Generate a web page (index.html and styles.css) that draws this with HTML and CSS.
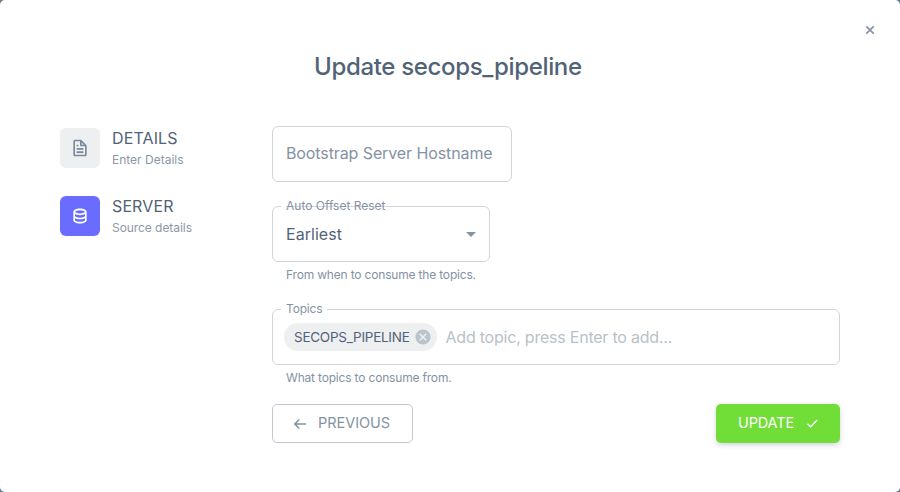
FILE: index.html
```html
<!DOCTYPE html>
<html lang="en">
<head>
<meta charset="utf-8">
<title>Update secops_pipeline</title>
<link rel="stylesheet" href="styles.css">
</head>
<body>
<main class="dialog">
  <button class="close" aria-label="Close"><svg width="10" height="10" viewBox="0 0 10 10"><path d="M1.3 1.3l7.4 7.4M8.7 1.3L1.3 8.7" fill="none" stroke="currentColor" stroke-width="1.7"/></svg></button>
  <h1 class="title"><span>Update secops_pipeline</span></h1>
  <div class="layout">
    <nav class="steps">
      <div class="step">
        <span class="avatar"><svg width="20" height="20" viewBox="0 0 24 24"><path fill="currentColor" d="M19.903 8.586a.997.997 0 0 0-.196-.293l-6-6a.997.997 0 0 0-.293-.196c-.03-.014-.062-.022-.094-.033a.991.991 0 0 0-.259-.051C13.04 2.011 13.021 2 13 2H6c-1.103 0-2 .897-2 2v16c0 1.103.897 2 2 2h12c1.103 0 2-.897 2-2V9c0-.021-.011-.04-.013-.062a.952.952 0 0 0-.051-.259c-.01-.032-.019-.063-.033-.093zM16.586 8H14V5.414L16.586 8zM6 20V4h6v5a1 1 0 0 0 1 1h5l.002 10H6z"/><path fill="currentColor" d="M8 12h8v2H8zm0 4h8v2H8zm0-8h2v2H8z"/></svg></span>
        <div class="step-text"><span class="step-name details">DETAILS</span><span class="step-note enter">Enter Details</span></div>
      </div>
      <div class="step">
        <span class="avatar active"><svg width="20" height="20" viewBox="0 0 24 24"><path fill="currentColor" d="M20 17V7c0-2.168-3.663-4-8-4S4 4.832 4 7v10c0 2.168 3.663 4 8 4s8-1.832 8-4zM12 5c3.691 0 5.931 1.507 6 1.994C17.931 7.493 15.691 9 12 9S6.069 7.493 6 7.006C6.069 6.507 8.309 5 12 5zM6 9.607C7.479 10.454 9.637 11 12 11s4.521-.546 6-1.393v2.387c-.069.499-2.309 2.006-6 2.006s-5.931-1.507-6-2V9.607zM6 17v-2.393C7.479 15.454 9.637 16 12 16s4.521-.546 6-1.393v2.387c-.069.499-2.309 2.006-6 2.006s-5.931-1.507-6-2z"/></svg></span>
        <div class="step-text"><span class="step-name server">SERVER</span><span class="step-note source">Source details</span></div>
      </div>
    </nav>
    <form class="form">
      <div class="field host"><span class="host-label">Bootstrap Server Hostname</span></div>
      <div class="field select">
        <span class="label struck"><span class="offset-label">Auto Offset Reset</span></span>
        <span class="value">Earliest</span>
        <svg class="arrow" width="24" height="24" viewBox="0 0 24 24"><path fill="currentColor" d="M7 10l5 5 5-5z"/></svg>
      </div>
      <p class="helper offset-help">From when to consume the topics.</p>
      <div class="field topics">
        <span class="label"><span class="topics-label">Topics</span></span>
        <span class="chip"><span class="chip-text">SECOPS_PIPELINE</span><svg width="18" height="18" viewBox="0 0 24 24"><path fill="currentColor" d="M12 2C6.47 2 2 6.47 2 12s4.47 10 10 10 10-4.47 10-10S17.53 2 12 2zm5 13.59L15.59 17 12 13.41 8.41 17 7 15.59 10.59 12 7 8.41 8.41 7 12 10.59 15.59 7 17 8.41 13.41 12 17 15.59z"/></svg></span>
        <span class="placeholder">Add topic, press Enter to add...</span>
      </div>
      <p class="helper topics-help">What topics to consume from.</p>
      <div class="actions">
        <button type="button" class="btn previous"><svg width="18" height="18" viewBox="0 0 24 24"><path fill="currentColor" d="M20 11H7.414l4.293-4.293-1.414-1.414L3.586 12l6.707 6.707 1.414-1.414L7.414 13H20z"/></svg><span>PREVIOUS</span></button>
        <button type="button" class="btn update"><span>UPDATE</span><svg width="18" height="18" viewBox="0 0 24 24"><path fill="currentColor" d="m10 15.586-3.293-3.293-1.414 1.414L10 18.414l9.707-9.707-1.414-1.414z"/></svg></button>
      </div>
    </form>
  </div>
</main>
</body>
</html>
```
FILE: styles.css
```css
* { box-sizing: border-box; }
body { margin: 0; background: #697a8d; font-family: Inter, "Liberation Sans", sans-serif; color: #516377; }
.dialog { position: relative; height: 492px; background: #fff; border-radius: 5px; padding: 50px 60px 0; overflow: hidden; }
.close { position: absolute; top: 25px; right: 25px; width: 10px; height: 10px; padding: 0; border: 0; background: none; color: #8592a3; display: flex; }
.title { margin: 0; height: 32px; line-height: 33px; font-size: 24px; font-weight: 500; padding-left: 254px; white-space: nowrap; letter-spacing: -0.33px; }
.layout { display: flex; margin-top: 44px; }
.steps { width: 212px; padding-top: 2px; display: flex; flex-direction: column; gap: 28px; }
.step { display: flex; gap: 12px; height: 40px; }
.avatar { width: 40px; height: 40px; border-radius: 6px; background: #eeeff1; color: #7b8a9b; display: flex; align-items: center; justify-content: center; }
.avatar.active { background: #696cff; color: #fff; }
.step-text { display: flex; flex-direction: column; white-space: nowrap; }
.step-name { font-size: 16px; line-height: 20px; height: 22px; letter-spacing: 0.12px; }
.step-note { font-size: 12px; line-height: 20px; color: #8c98a7; }
.step-note { padding-top: 2px; }
.source { letter-spacing: -0.06px; }
.form { width: 568px; }
.field { position: relative; height: 56px; border: 1px solid #d2d6dc; border-radius: 6px; display: flex; align-items: center; padding-left: 13px; font-size: 16px; white-space: nowrap; }
.host { width: 240px; color: #8592a3; padding-bottom: 2px; letter-spacing: -0.1px; }
.select { width: 218px; margin-top: 24px; }
.value { letter-spacing: 0.05px; }
.arrow { position: absolute; right: 6px; top: 15px; color: #8592a3; }
.label { position: absolute; left: 8px; top: -9px; padding: 0 5px; height: 16px; line-height: 16px; font-size: 12px; color: #8592a3; background: #fff; }
.topics-label { letter-spacing: -0.18px; }
.struck { background: linear-gradient(#fff, #fff) 0 0 / 5px 16px no-repeat; }
.helper { margin: 4px 14px 0; height: 18px; line-height: 18px; font-size: 12px; color: #8592a3; white-space: nowrap; letter-spacing: -0.18px; }
.topics { margin-top: 25px; padding-left: 11px; }
.chip { width: 153px; height: 28px; border-radius: 14px; background: #eeeff1; display: flex; align-items: center; padding: 0 5px 0 10px; justify-content: space-between; font-size: 13.5px; }
.chip-text { letter-spacing: -0.26px; }
.chip svg { color: #bbc3cc; flex: none; }
.placeholder { margin-left: 8.5px; color: #b9c1ca; letter-spacing: -0.22px; }
.actions { display: flex; justify-content: space-between; margin-top: 17px; }
.btn { height: 39px; border-radius: 5px; display: flex; align-items: center; font: 400 14.5px Inter, "Liberation Sans", sans-serif; white-space: nowrap; }
.btn span { padding-bottom: 2px; letter-spacing: -0.04px; }
.previous { width: 141px; padding: 0 0 0 18px; gap: 9px; border: 1px solid #c1c8d0; background: #fff; color: #8592a3; }
.update { width: 124px; padding: 0 19px 0 22px; justify-content: space-between; border: 0; background: #71dd37; color: #fff; box-shadow: 0 2px 5px rgba(67, 89, 113, .25); }
.update span { letter-spacing: -0.15px; }
.update svg { margin-bottom: 1px; }
```
